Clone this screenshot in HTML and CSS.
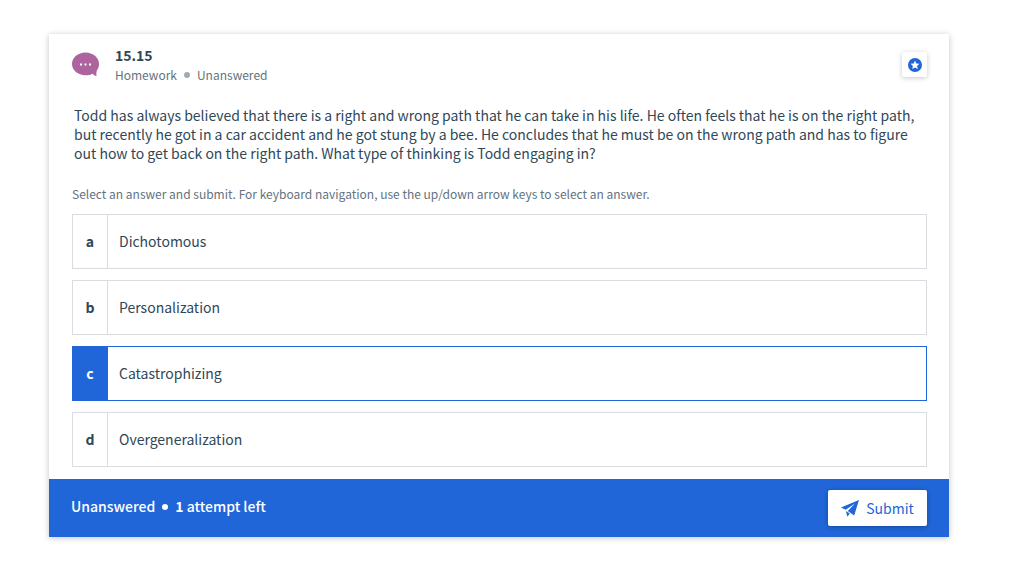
FILE: index.html
```html
<!DOCTYPE html>
<html lang="en">
<head>
<meta charset="utf-8">
<meta name="viewport" content="width=device-width, initial-scale=1">
<title>15.15 Homework</title>
<link rel="stylesheet" href="styles.css">
</head>
<body>
<main class="card">
  <header class="card-header">
    <svg class="bubble" viewBox="0 0 28 26" aria-hidden="true">
      <path fill="#ad639d" d="M13.5 .6C6 .6 0 5.600 0 12S6 23.200 13.500 23.200c2.600 0 5-.5 7.100-1.500 1.200 1.300 2.300 2.100 3.900 2.500-.3-1.700-.2-3.400.2-5.400 1.500-1.900 2.300-4.200 2.300-6.800C27 5.600 21 .6 13.500 .6z"/>
      <path fill="#fff" d="M8 11.500h2v2H8zM12.500 11.500h2v2h-2zM17 11.500h2v2h-2z"/>
    </svg>
    <div class="heading">
      <h1 class="title">15.15</h1>
      <p class="meta"><span>Homework</span><span class="dot dot-muted"></span><span>Unanswered</span></p>
    </div>
    <button class="star-button" type="button" aria-label="Bookmark question">
      <svg class="star-icon" viewBox="0 0 14 14" aria-hidden="true">
        <circle cx="7" cy="7" r="7" fill="#2066d9"/>
        <path fill="#fff" d="M7 2.600l1.300 2.900 3.100.3-2.300 2.100.7 3.100L7 9.400 4.200 11l.7-3.100-2.300-2.100 3.100-.3z"/>
      </svg>
    </button>
  </header>
  <form class="question">
    <p class="prompt">Todd has always believed that there is a right and wrong path that he can take in his life. He often feels that he is on the right path, but recently he got in a car accident and he got stung by a bee. He concludes that he must be on the wrong path and has to figure out how to get back on the right path. What type of thinking is Todd engaging in?</p>
    <fieldset class="answers">
      <legend class="hint">Select an answer and submit. For keyboard navigation, use the up/down arrow keys to select an answer.</legend>
      <div class="answer-list">
        <label class="answer"><input class="answer-input" type="radio" name="answer" value="a"><span class="answer-key">a</span><span class="answer-text">Dichotomous</span></label>
        <label class="answer"><input class="answer-input" type="radio" name="answer" value="b"><span class="answer-key">b</span><span class="answer-text">Personalization</span></label>
        <label class="answer"><input class="answer-input" type="radio" name="answer" value="c" checked><span class="answer-key">c</span><span class="answer-text">Catastrophizing</span></label>
        <label class="answer"><input class="answer-input" type="radio" name="answer" value="d"><span class="answer-key">d</span><span class="answer-text">Overgeneralization</span></label>
      </div>
    </fieldset>
    <footer class="card-footer">
      <p class="status"><span>Unanswered</span><span class="dot"></span><span><b>1</b> attempt left</span></p>
      <button class="submit" type="submit">
        <svg class="plane" viewBox="0 0 18 17" aria-hidden="true">
          <path fill="#2066d9" d="M18 0L0 7.600l4.600 2.200L14 3.600 6.800 11l6.400 4.400z"/>
          <path fill="#2066d9" d="M4.800 11.100l1.600 5.700 2.400-3.400z"/>
        </svg>
        <span>Submit</span>
      </button>
    </footer>
  </form>
</main>
</body>
</html>
```
FILE: styles.css
```css
* {
  box-sizing: border-box;
}

body {
  margin: 0;
  padding: 34px 80px 28px 49px;
  background: #fff;
  color: #2f4858;
  font-family: "Noto Sans CJK SC", "Noto Sans", sans-serif;
  font-size: 14px;
  line-height: 19px;
}

h1,
p,
fieldset,
legend {
  margin: 0;
  padding: 0;
  border: 0;
}

button {
  padding: 0;
  border: 0;
  background: #fff;
  font-family: inherit;
  cursor: pointer;
}

.card {
  background: #fff;
  box-shadow: 0 1px 6px rgba(0, 0, 0, 0.24);
}

.card-header {
  display: flex;
  align-items: flex-start;
  padding: 12px 22px 0 23px;
}

.bubble {
  width: 28px;
  height: 26px;
  margin-top: 6px;
}

.heading {
  flex: 1;
  padding-left: 15px;
}

.title {
  font-size: 14px;
  font-weight: 700;
}

.meta {
  display: flex;
  align-items: center;
  gap: 7px;
  color: #637381;
  font-size: 12px;
}

.dot {
  width: 6px;
  height: 6px;
  border-radius: 50%;
  background: #fff;
}

.dot-muted {
  background: #9eabb5;
}

.star-button {
  display: grid;
  place-items: center;
  width: 25px;
  height: 25px;
  margin-top: 6px;
  border-radius: 2px;
  box-shadow: 0 1px 5px rgba(0, 0, 0, 0.22);
}

.star-icon {
  width: 14px;
  height: 14px;
}

.prompt {
  padding: 22px 24px 0 25px;
}

.answers {
  min-width: 0;
  padding: 11px 22px 12px 23px;
}

.hint {
  padding-top: 21px;
  color: #637381;
  font-size: 12px;
}

.answer-list {
  display: grid;
  gap: 11px;
}

.answer {
  position: relative;
  display: flex;
  min-height: 55px;
  border: 1px solid #d9dce1;
  cursor: pointer;
}

.answer-input {
  position: absolute;
  opacity: 0;
}

.answer-key {
  display: grid;
  place-items: center;
  width: 35px;
  border-right: 1px solid #d9dce1;
  font-weight: 700;
}

.answer-text {
  align-self: center;
  padding-left: 11px;
}

.answer:has(:checked) {
  border-color: #2066d9;
}

.answer-input:checked + .answer-key {
  border-color: #2066d9;
  background: #2066d9;
  color: #fff;
}

.card-footer {
  display: flex;
  align-items: center;
  justify-content: space-between;
  padding: 11px 22px;
  background: #2066d9;
  color: #fff;
}

.status {
  display: flex;
  align-items: center;
  gap: 7px;
  padding-bottom: 3px;
  font-weight: 500;
}

.submit {
  display: flex;
  align-items: center;
  justify-content: center;
  gap: 7px;
  width: 99px;
  height: 36px;
  border-radius: 2px;
  box-shadow: 0 1px 5px rgba(0, 0, 0, 0.3);
  color: #2066d9;
  font-size: 14px;
}

.plane {
  width: 18px;
  height: 17px;
}
```
